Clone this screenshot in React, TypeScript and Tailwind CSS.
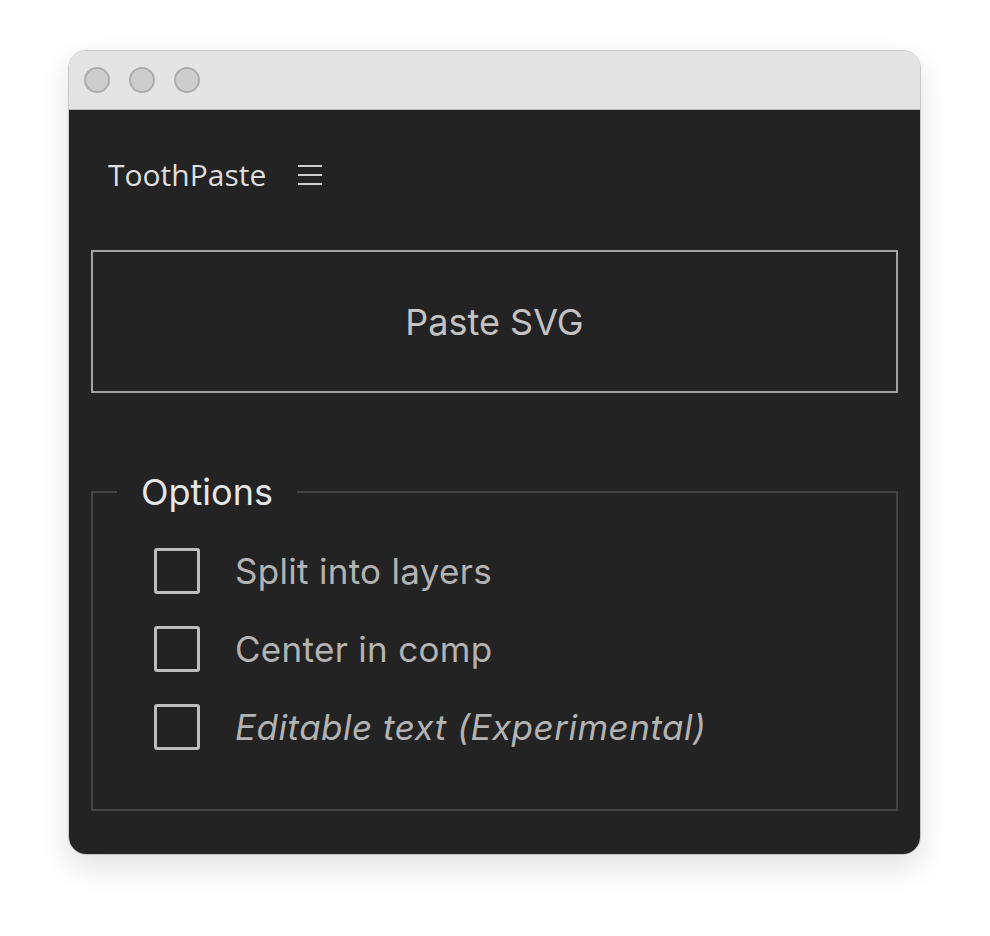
const options = [
  { label: "Split into layers", italic: false },
  { label: "Center in comp", italic: false },
  { label: "Editable text (Experimental)", italic: true },
];

function Checkbox() {
  return (
    <span className="w-[46px] h-[46px] shrink-0 rounded-[3px] border-[3px] border-[#bdbdbd]" />
  );
}

export default function App() {
  return (
    <div className="min-h-screen bg-white pt-[50px] pl-[68px] font-['Inter',sans-serif]">
      <div className="w-[853px] h-[805px] flex flex-col rounded-[18px] overflow-hidden border border-[#c8c8c8] shadow-[0_12px_30px_rgba(0,0,0,0.12)]">
        {/* title bar */}
        <div className="h-[59px] shrink-0 bg-[#e4e4e4] border-b border-[#b8b8b8] flex items-center gap-[19px] pl-[15px]">
          <span className="w-[26px] h-[26px] rounded-full bg-[#cdcdcd] border-2 border-[#adadad]" />
          <span className="w-[26px] h-[26px] rounded-full bg-[#cdcdcd] border-2 border-[#adadad]" />
          <span className="w-[26px] h-[26px] rounded-full bg-[#cdcdcd] border-2 border-[#adadad]" />
        </div>

        {/* panel */}
        <div className="flex-1 bg-[#232323] px-[22px] pt-[47px]">
          <div className="flex items-center gap-[32px] pl-[17px] h-[36px]">
            <span className="text-[30px] leading-[36px] text-[#dedede] font-['Open_Sans',sans-serif]">
              ToothPaste
            </span>
            <svg width="24" height="22" viewBox="0 0 24 22" className="text-[#cfcfcf]">
              <path d="M0 2h24M0 11h24M0 20h24" stroke="currentColor" strokeWidth="2" />
            </svg>
          </div>

          <button className="mt-[57px] w-full h-[143px] border-2 border-[#a3a3a3] text-[36px] text-[#c2c2c2] flex items-center justify-center">
            Paste SVG
          </button>

          <fieldset className="mt-[79px] border-2 border-[#444444]">
            <legend className="ml-[24px] px-[24px] text-[36px] leading-[40px] text-[#e6e6e6]">
              Options
            </legend>
            <div className="pl-[61px] pt-[36px] pb-[59px] flex flex-col gap-[32px]">
              {options.map((o) => (
                <label key={o.label} className="flex items-center gap-[35px]">
                  <Checkbox />
                  <span
                    className={
                      o.italic
                        ? "italic text-[35px] leading-[46px] tracking-[0.5px] text-[#b3b3b3]"
                        : "text-[35px] leading-[46px] tracking-[0.3px] text-[#b3b3b3]"
                    }
                  >
                    {o.label}
                  </span>
                </label>
              ))}
            </div>
          </fieldset>
        </div>
      </div>
    </div>
  );
}
